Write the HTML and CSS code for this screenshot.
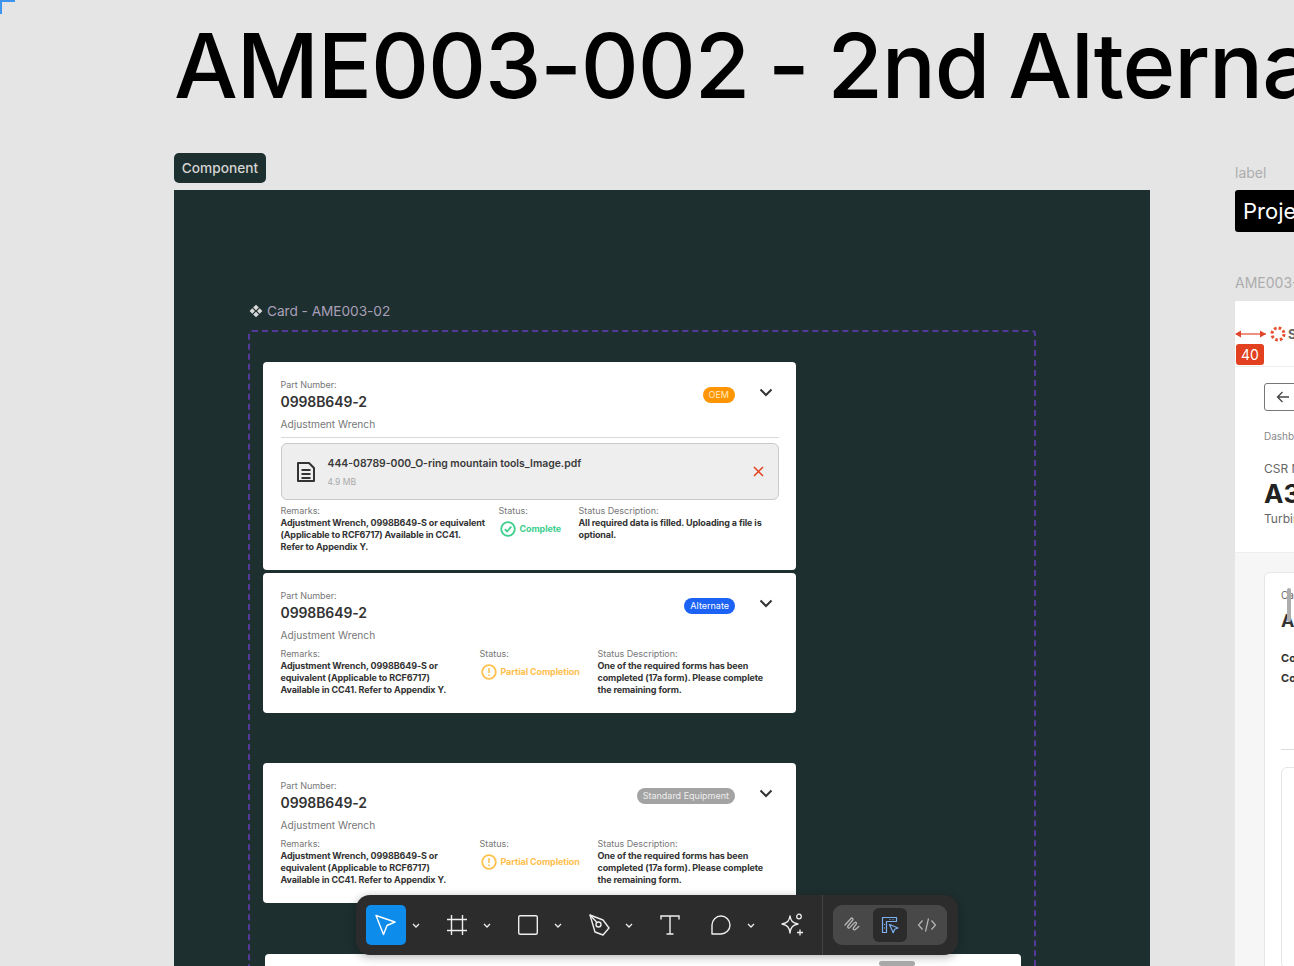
FILE: index.html
```html
<!DOCTYPE html>
<html>
<head>
    <meta charset="utf-8">
    <link rel="stylesheet" href="styles.css">
</head>
<body>
    <div class="canvas">
        <div class="corner-mark"></div>
        <h1 class="page-title">AME003-002 - 2nd Alternate</h1>
        <div class="section-tag">Component</div>

        <div class="dark-frame">
            <div class="frame-label">
                <svg class="component-icon" width="14" height="14" viewBox="0 0 14 14">
                    <path d="M7 .7l2.900 2.900L7 6.300 4.100 3.600zM3.300 4.300L6 7 3.300 9.700.6 7zM10.700 4.300L13.400 7l-2.700 2.700L8 7zM7 7.700l2.900 2.700L7 13.300l-2.900-2.900z" fill="#d8d8d8"/>
                </svg>
                Card - AME003-02
            </div>
            <div class="dashed-box">
                <div class="card">
                    <div class="card-head">
                        <div class="part-info">
                            <div class="small-label">Part Number:</div>
                            <div class="part-number">0998B649-2</div>
                            <div class="part-name">Adjustment Wrench</div>
                        </div>
                        <span class="badge badge-oem">OEM</span>
                        <svg class="chevron" width="14" height="9" viewBox="0 0 14 9"><path d="M1.5 1.5L7 7l5.500-5.500" fill="none" stroke="#333" stroke-width="2"/></svg>
                    </div>
                    <div class="divider"></div>
                    <div class="file-box">
                        <svg class="file-icon" width="20" height="22" viewBox="0 0 20 22">
                            <path d="M2 2h11l5 5v13H2z" fill="none" stroke="#333" stroke-width="2" stroke-linejoin="round"/>
                            <path d="M5.500 9h9M5.500 13h9M5.500 17h9" stroke="#333" stroke-width="1.800"/>
                        </svg>
                        <div class="file-text">
                            <div class="file-name">444-08789-000_O-ring mountain tools_Image.pdf</div>
                            <div class="file-size">4.9 MB</div>
                        </div>
                        <svg class="file-remove" width="11" height="11" viewBox="0 0 11 11"><path d="M1 1l9 9M10 1l-9 9" stroke="#e2401f" stroke-width="1.500"/></svg>
                    </div>
                    <div class="details details-wide">
                        <div class="remarks">
                            <div class="small-label">Remarks:</div>
                            <div class="detail-text">Adjustment Wrench, 0998B649-S or equivalent (Applicable to RCF6717) Available in CC41.<br>Refer to Appendix Y.</div>
                        </div>
                        <div>
                            <div class="small-label">Status:</div>
                            <div class="status status-complete">
                                <svg width="16" height="16" viewBox="0 0 16 16"><circle cx="8" cy="8" r="6.800" fill="none" stroke="#3ecf8e" stroke-width="1.800"/><path d="M4.800 8.200l2.300 2.300 4.200-4.800" fill="none" stroke="#3ecf8e" stroke-width="1.800"/></svg>
                                Complete
                            </div>
                        </div>
                        <div>
                            <div class="small-label">Status Description:</div>
                            <div class="detail-text">All required data is filled. Uploading a file is optional.</div>
                        </div>
                    </div>
                </div>

                <div class="card card-near">
                    <div class="card-head">
                        <div class="part-info">
                            <div class="small-label">Part Number:</div>
                            <div class="part-number">0998B649-2</div>
                            <div class="part-name">Adjustment Wrench</div>
                        </div>
                        <span class="badge badge-alternate">Alternate</span>
                        <svg class="chevron" width="14" height="9" viewBox="0 0 14 9"><path d="M1.5 1.5L7 7l5.500-5.500" fill="none" stroke="#333" stroke-width="2"/></svg>
                    </div>
                    <div class="details details-narrow">
                        <div class="remarks">
                            <div class="small-label">Remarks:</div>
                            <div class="detail-text">Adjustment Wrench, 0998B649-S or equivalent (Applicable to RCF6717) Available in CC41. Refer to Appendix Y.</div>
                        </div>
                        <div>
                            <div class="small-label">Status:</div>
                            <div class="status status-partial">
                                <svg width="16" height="16" viewBox="0 0 16 16"><circle cx="8" cy="8" r="6.800" fill="none" stroke="#ffc04d" stroke-width="1.800"/><path d="M8 4v5M8 10.600v1.400" stroke="#ffc04d" stroke-width="1.500"/></svg>
                                Partial Completion
                            </div>
                        </div>
                        <div>
                            <div class="small-label">Status Description:</div>
                            <div class="detail-text">One of the required forms has been completed (17a form). Please complete<br>the remaining form.</div>
                        </div>
                    </div>
                </div>

                <div class="card card-far">
                    <div class="card-head">
                        <div class="part-info">
                            <div class="small-label">Part Number:</div>
                            <div class="part-number">0998B649-2</div>
                            <div class="part-name">Adjustment Wrench</div>
                        </div>
                        <span class="badge badge-standard">Standard Equipment</span>
                        <svg class="chevron" width="14" height="9" viewBox="0 0 14 9"><path d="M1.5 1.5L7 7l5.500-5.500" fill="none" stroke="#333" stroke-width="2"/></svg>
                    </div>
                    <div class="details details-narrow">
                        <div class="remarks">
                            <div class="small-label">Remarks:</div>
                            <div class="detail-text">Adjustment Wrench, 0998B649-S or equivalent (Applicable to RCF6717) Available in CC41. Refer to Appendix Y.</div>
                        </div>
                        <div>
                            <div class="small-label">Status:</div>
                            <div class="status status-partial">
                                <svg width="16" height="16" viewBox="0 0 16 16"><circle cx="8" cy="8" r="6.800" fill="none" stroke="#ffc04d" stroke-width="1.800"/><path d="M8 4v5M8 10.600v1.400" stroke="#ffc04d" stroke-width="1.500"/></svg>
                                Partial Completion
                            </div>
                        </div>
                        <div>
                            <div class="small-label">Status Description:</div>
                            <div class="detail-text">One of the required forms has been completed (17a form). Please complete<br>the remaining form.</div>
                        </div>
                    </div>
                </div>

                <div class="card-wide"></div>
            </div>
        </div>

        <div class="side-column">
            <div class="side-label">label</div>
            <div class="project-box">Project</div>
            <div class="side-label side-label-frame">AME003-002</div>
            <div class="side-panel">
                <div class="panel-top">
                    <div class="panel-logo">
                        <svg width="16" height="16" viewBox="0 0 16 16">
                            <circle cx="8" cy="8" r="6" fill="none" stroke="#e8502f" stroke-width="3" stroke-dasharray="2.600 2.100"/>
                        </svg>
                        <span>Site</span>
                    </div>
                </div>
                <div class="panel-info">
                    <div class="back-button">
                        <svg width="14" height="12" viewBox="0 0 14 12"><path d="M13 6H2M6.500 1L1.500 6l5 5" fill="none" stroke="#444" stroke-width="1.300"/></svg>
                    </div>
                    <div class="crumbs">Dashboard</div>
                    <div class="csr-label">CSR Number</div>
                    <div class="csr-number">A3001</div>
                    <div class="csr-sub">Turbine</div>
                </div>
                <div class="panel-body">
                    <div class="panel-card">
                        <div class="panel-card-label">Card</div>
                        <div class="panel-card-title">AME</div>
                        <div class="panel-card-line">Contract</div>
                        <div class="panel-card-line">Contact</div>
                        <div class="panel-card-rule"></div>
                        <div class="panel-card-inner"></div>
                    </div>
                </div>
            </div>
            <div class="spacing-marker">
                <svg width="32" height="10" viewBox="0 0 32 10"><path d="M1 5h30" stroke="#e2452b" stroke-width="1.200"/><path d="M0 5l6-3.500v7zM31 5l-6-3.500v7z" fill="#e2452b"/></svg>
                <span class="spacing-value">40</span>
            </div>
            <div class="panel-scroll"></div>
        </div>

        <div class="toolbar">
            <div class="tool tool-active">
                <svg width="26" height="26" viewBox="0 0 26 26"><path d="M3 3.500l19 6.500-8 3.500-3.500 9z" fill="none" stroke="#fff" stroke-width="1.400" stroke-linejoin="round"/></svg>
            </div>
            <div class="tool-caret"><svg width="8" height="5" viewBox="0 0 8 5"><path d="M1 1l3 3 3-3" fill="none" stroke="#eee" stroke-width="1.300"/></svg></div>

            <div class="tool tool-gap">
                <svg width="22" height="22" viewBox="0 0 22 22"><path d="M5.500 1v20M16.500 1v20M1 5.500h20M1 16.500h20" stroke="#eee" stroke-width="1.400"/></svg>
            </div>
            <div class="tool-caret"><svg width="8" height="5" viewBox="0 0 8 5"><path d="M1 1l3 3 3-3" fill="none" stroke="#eee" stroke-width="1.300"/></svg></div>

            <div class="tool tool-gap">
                <svg width="22" height="22" viewBox="0 0 22 22"><rect x="1.700" y="1.700" width="18.600" height="18.600" rx="1.500" fill="none" stroke="#eee" stroke-width="1.400"/></svg>
            </div>
            <div class="tool-caret"><svg width="8" height="5" viewBox="0 0 8 5"><path d="M1 1l3 3 3-3" fill="none" stroke="#eee" stroke-width="1.300"/></svg></div>

            <div class="tool tool-gap">
                <svg width="24" height="24" viewBox="0 0 24 24"><path d="M3 2l13 5 6 8-6 7-8-3z" fill="none" stroke="#eee" stroke-width="1.400" stroke-linejoin="round"/><circle cx="11.500" cy="11.500" r="2.500" fill="none" stroke="#eee" stroke-width="1.400"/><path d="M3 2l7 7.500" stroke="#eee" stroke-width="1.400"/></svg>
            </div>
            <div class="tool-caret"><svg width="8" height="5" viewBox="0 0 8 5"><path d="M1 1l3 3 3-3" fill="none" stroke="#eee" stroke-width="1.300"/></svg></div>

            <div class="tool tool-gap">
                <svg width="22" height="22" viewBox="0 0 22 22"><path d="M2 5.500V2h18v3.500M11 2v18M7.500 20h7" fill="none" stroke="#eee" stroke-width="1.400"/></svg>
            </div>

            <div class="tool tool-gap">
                <svg width="22" height="22" viewBox="0 0 22 22"><path d="M2 20V11a9 9 0 1 1 9 9z" fill="none" stroke="#eee" stroke-width="1.400" stroke-linejoin="round"/></svg>
            </div>
            <div class="tool-caret"><svg width="8" height="5" viewBox="0 0 8 5"><path d="M1 1l3 3 3-3" fill="none" stroke="#eee" stroke-width="1.300"/></svg></div>

            <div class="tool tool-gap">
                <svg width="26" height="26" viewBox="0 0 26 26"><path d="M11 4c.8 5 2.500 6.700 8 8-5.500 1.300-7.200 3-8 9-.8-6-2.500-7.700-8-9 5.500-1.300 7.200-3 8-8z" fill="none" stroke="#eee" stroke-width="1.400" stroke-linejoin="round"/><circle cx="20" cy="4.500" r="2.300" fill="none" stroke="#eee" stroke-width="1.300"/><path d="M21 17.500v6M18 20.500h6" stroke="#eee" stroke-width="1.300"/></svg>
            </div>

            <div class="mode-section">
                <div class="mode-group">
                    <div class="mode">
                        <svg width="20" height="20" viewBox="0 0 20 20"><path d="M2 10l6-6.500c1.100-1.100 2.700.3 1.700 1.600L5 11c-1.100 1.400.6 2.800 1.800 1.600l4.700-5c1.100-1.100 2.700.3 1.700 1.600l-2.700 3.600c-1 1.400.6 2.600 1.800 1.600l3.500-3" fill="none" stroke="#b8b8b8" stroke-width="1.300" stroke-linecap="round"/></svg>
                    </div>
                    <div class="mode mode-active">
                        <svg width="18" height="18" viewBox="0 0 18 18"><path d="M1.500 1.500h14v4h-10v11h-4z" fill="none" stroke="#7cb0f2" stroke-width="1.200" stroke-linejoin="round"/><path d="M3.500 8v1M3.500 11.500v1M8.500 3.500h1M11.500 3.500h1" stroke="#7cb0f2" stroke-width="1.200"/><path d="M8.500 8.500l8.500 3.500-3.300 1.300-1.500 3.500z" fill="none" stroke="#7cb0f2" stroke-width="1.200" stroke-linejoin="round"/></svg>
                    </div>
                    <div class="mode">
                        <svg width="20" height="16" viewBox="0 0 20 16"><path d="M5.500 3.500L1.500 8l4 4.500M14.500 3.500l4 4.500-4 4.500M11.500 1.500l-3 13" fill="none" stroke="#b8b8b8" stroke-width="1.200"/></svg>
                    </div>
                </div>
            </div>
        </div>
        <div class="toolbar-handle"></div>
    </div>
</body>
</html>
```

FILE: styles.css
```css
html, body {
    margin: 0;
    padding: 0;
}

body {
    font-family: Inter, "Liberation Sans", sans-serif;
    background: #e5e5e5;
}

.canvas {
    position: relative;
    width: 1294px;
    height: 966px;
    overflow: hidden;
    background: #e5e5e5;
}

.corner-mark {
    position: absolute;
    left: 0;
    top: 0;
    width: 13px;
    height: 12px;
    border-top: 2px solid #3f94f0;
    border-left: 2px solid #3f94f0;
}

.page-title {
    position: absolute;
    left: 174px;
    top: 11px;
    margin: 0;
    font-size: 90px;
    line-height: 109px;
    font-weight: 500;
    letter-spacing: -1.1px;
    word-spacing: -4px;
    color: #000;
    white-space: nowrap;
}

.section-tag {
    position: absolute;
    left: 174px;
    top: 153px;
    width: 92px;
    height: 30px;
    line-height: 30px;
    text-align: center;
    font-size: 13.7px;
    font-weight: 500;
    color: #d5d5d5;
    background: #1e2f2f;
    border-radius: 5px;
}

/* free canvas frames */
.dark-frame {
    position: absolute;
    left: 174px;
    top: 190px;
    width: 976px;
    height: 800px;
    padding: 112px 0 0 74px;
    box-sizing: border-box;
    background: #1e2f2f;
}

.frame-label {
    display: flex;
    align-items: center;
    gap: 4px;
    height: 18px;
    margin-left: 1px;
    font-size: 13.7px;
    letter-spacing: -0.05px;
    color: #a89fb8;
}

.dashed-box {
    width: 788px;
    height: 700px;
    margin-top: 10px;
    padding: 30px 0 0 13px;
    box-sizing: border-box;
    border: 2px dashed #54399a;
    border-radius: 4px;
}

.card {
    width: 533px;
    padding: 17px 17.5px;
    box-sizing: border-box;
    background: #fff;
    border-radius: 4px;
}

.card-near {
    margin-top: 3px;
}

.card-far {
    margin-top: 50px;
}

.card-wide {
    width: 756px;
    height: 80px;
    margin: 51px 0 0 2px;
    background: #fff;
    border-radius: 4px;
}

.card-head {
    display: flex;
    align-items: flex-start;
}

.part-info {
    flex: 1;
}

.small-label {
    font-size: 9px;
    line-height: 12px;
    letter-spacing: -0.03px;
    color: #777;
}

.part-number {
    margin-top: 2px;
    font-size: 14px;
    line-height: 18px;
    font-weight: 600;
    letter-spacing: -0.1px;
    color: #333;
}

.part-name {
    margin: 6px 0 1px 0;
    font-size: 10.2px;
    line-height: 14px;
    color: #777;
}

.badge {
    margin-top: 8px;
    padding: 0 6px;
    height: 16px;
    line-height: 16px;
    font-size: 9px;
    color: #fff;
    border-radius: 8px;
}

.badge-oem {
    background: #ff9500;
    color: #ffe9c4;
}

.badge-alternate {
    background: #1b62f5;
}

.badge-standard {
    background: #a3a3a3;
    color: #eee;
}

.chevron {
    margin: 9px 5.5px 0 24px;
}

.divider {
    height: 1px;
    margin-top: 5px;
    background: #d9d9d9;
}

.file-box {
    display: flex;
    align-items: center;
    height: 57px;
    margin-top: 5px;
    padding: 2px 14px 0 14px;
    box-sizing: border-box;
    background: #eeeeee;
    border: 1px solid #c9c9c9;
    border-radius: 6px;
}

.file-icon {
    margin: -2px 12px 0 0;
}

.file-text {
    flex: 1;
}

.file-name {
    font-size: 10.4px;
    line-height: 14px;
    font-weight: 600;
    color: #3a3a3a;
}

.file-size {
    margin-top: 5px;
    font-size: 8.500px;
    line-height: 12px;
    color: #aaa;
}

.file-remove {
    margin-top: -2px;
}

.details {
    display: grid;
    margin-top: 5px;
}

.details-wide {
    grid-template-columns: 218px 80px 1fr;
}

.details-wide .remarks {
    padding-right: 8px;
}

.details-narrow {
    grid-template-columns: 199px 118px 1fr;
}

.details-narrow .remarks {
    padding-right: 20px;
}

.detail-text {
    font-size: 9px;
    line-height: 12px;
    font-weight: 700;
    letter-spacing: -0.12px;
    color: #333;
}

.status {
    display: flex;
    align-items: center;
    gap: 4px;
    margin: 4px 0 0 1px;
    font-size: 9px;
    line-height: 16px;
    font-weight: 700;
    letter-spacing: -0.1px;
    white-space: nowrap;
}

.status-complete {
    color: #3ecf8e;
}

.status-partial {
    color: #ffc04d;
}

/* frame on the right, cut off by the window */
.side-column {
    position: absolute;
    left: 1235px;
    top: 164px;
    width: 400px;
}

.side-label {
    height: 18px;
    line-height: 18px;
    font-size: 14px;
    color: #adadad;
}

.side-label-frame {
    margin-top: 42px;
}

.project-box {
    height: 42px;
    margin-top: 8px;
    padding-left: 8px;
    line-height: 42px;
    font-size: 22px;
    color: #fff;
    background: #000;
    border-radius: 3px;
}

.side-panel {
    margin-top: 9px;
    background: #fff;
}

.panel-top {
    height: 66px;
    box-sizing: border-box;
    padding: 25px 0 0 35px;
    border-bottom: 1px solid #eee;
}

.panel-logo {
    display: flex;
    align-items: center;
    gap: 2px;
    font-size: 13px;
    font-weight: 700;
    color: #666;
}

.panel-info {
    height: 186px;
    box-sizing: border-box;
    padding: 16px 0 0 29px;
    border-bottom: 1px solid #eee;
}

.back-button {
    display: flex;
    align-items: center;
    width: 60px;
    height: 28px;
    padding-left: 11px;
    box-sizing: border-box;
    border: 1px solid #777;
    border-radius: 3px;
}

.crumbs {
    margin-top: 18px;
    font-size: 10px;
    line-height: 14px;
    color: #888;
}

.csr-label {
    margin-top: 18px;
    font-size: 12px;
    line-height: 16px;
    color: #666;
}

.csr-number {
    margin-top: 2px;
    font-size: 26px;
    line-height: 30px;
    font-weight: 700;
    color: #222;
}

.csr-sub {
    margin-top: 2px;
    font-size: 12px;
    line-height: 16px;
    color: #666;
}

.panel-body {
    height: 420px;
    padding: 19px 0 0 29px;
    background: #f6f6f6;
}

.panel-card {
    height: 400px;
    padding: 15px 0 0 16px;
    box-sizing: border-box;
    background: #fff;
    border: 1px solid #e6e6e6;
    border-radius: 6px;
}

.panel-card-label {
    font-size: 10px;
    line-height: 14px;
    color: #666;
}

.panel-card-title {
    margin-top: 7px;
    font-size: 18px;
    line-height: 24px;
    font-weight: 700;
    color: #333;
}

.panel-card-line {
    margin-top: 19px;
    font-size: 11px;
    line-height: 12px;
    font-weight: 700;
    color: #333;
}

.panel-card-line + .panel-card-line {
    margin-top: 8px;
}

.panel-card-rule {
    height: 1px;
    margin-top: 65px;
    background: #ddd;
}

.panel-card-inner {
    height: 200px;
    margin-top: 17px;
    background: #fff;
    border: 1px solid #e6e6e6;
    border-radius: 6px;
}

.spacing-marker {
    position: absolute;
    left: 0;
    top: 165px;
    width: 32px;
}

.spacing-marker svg {
    display: block;
}

.spacing-value {
    display: block;
    width: 28px;
    height: 21px;
    margin: 5px 0 0 1px;
    line-height: 21px;
    text-align: center;
    font-size: 14px;
    color: #fff;
    background: #e2401f;
    border-radius: 3px;
}

.panel-scroll {
    position: absolute;
    left: 52px;
    top: 424px;
    width: 4px;
    height: 34px;
    background: #adadad;
    border-radius: 2px;
}

/* floating toolbar */
.toolbar {
    position: absolute;
    left: 356px;
    top: 895px;
    display: flex;
    align-items: center;
    width: 602px;
    height: 60px;
    padding-left: 10px;
    box-sizing: border-box;
    background: #2c2c2c;
    border-radius: 14px;
    box-shadow: 0 2px 10px rgba(0,0,0,0.3);
}

.tool {
    display: flex;
    align-items: center;
    justify-content: center;
    width: 40px;
    height: 40px;
    border-radius: 5px;
}

.tool-active {
    background: #0d8ceb;
}

.tool-gap {
    margin-left: 11px;
}

.tool-caret {
    display: flex;
    align-items: center;
    justify-content: center;
    width: 20px;
}

.mode-section {
    display: flex;
    align-items: center;
    height: 60px;
    margin-left: 10px;
    padding: 0 10px 0 10px;
    border-left: 1px solid #444;
}

.mode-group {
    display: flex;
    align-items: center;
    justify-content: space-between;
    width: 114px;
    height: 40px;
    padding: 0 3px;
    box-sizing: border-box;
    background: #484848;
    border-radius: 9px;
}

.mode {
    display: flex;
    align-items: center;
    justify-content: center;
    width: 34px;
    height: 34px;
    border-radius: 6px;
}

.mode-active {
    background: #2b2b2b;
}

.toolbar-handle {
    position: absolute;
    left: 879px;
    top: 961px;
    width: 36px;
    height: 5px;
    background: #a8a8a8;
    border-radius: 3px;
}
```
